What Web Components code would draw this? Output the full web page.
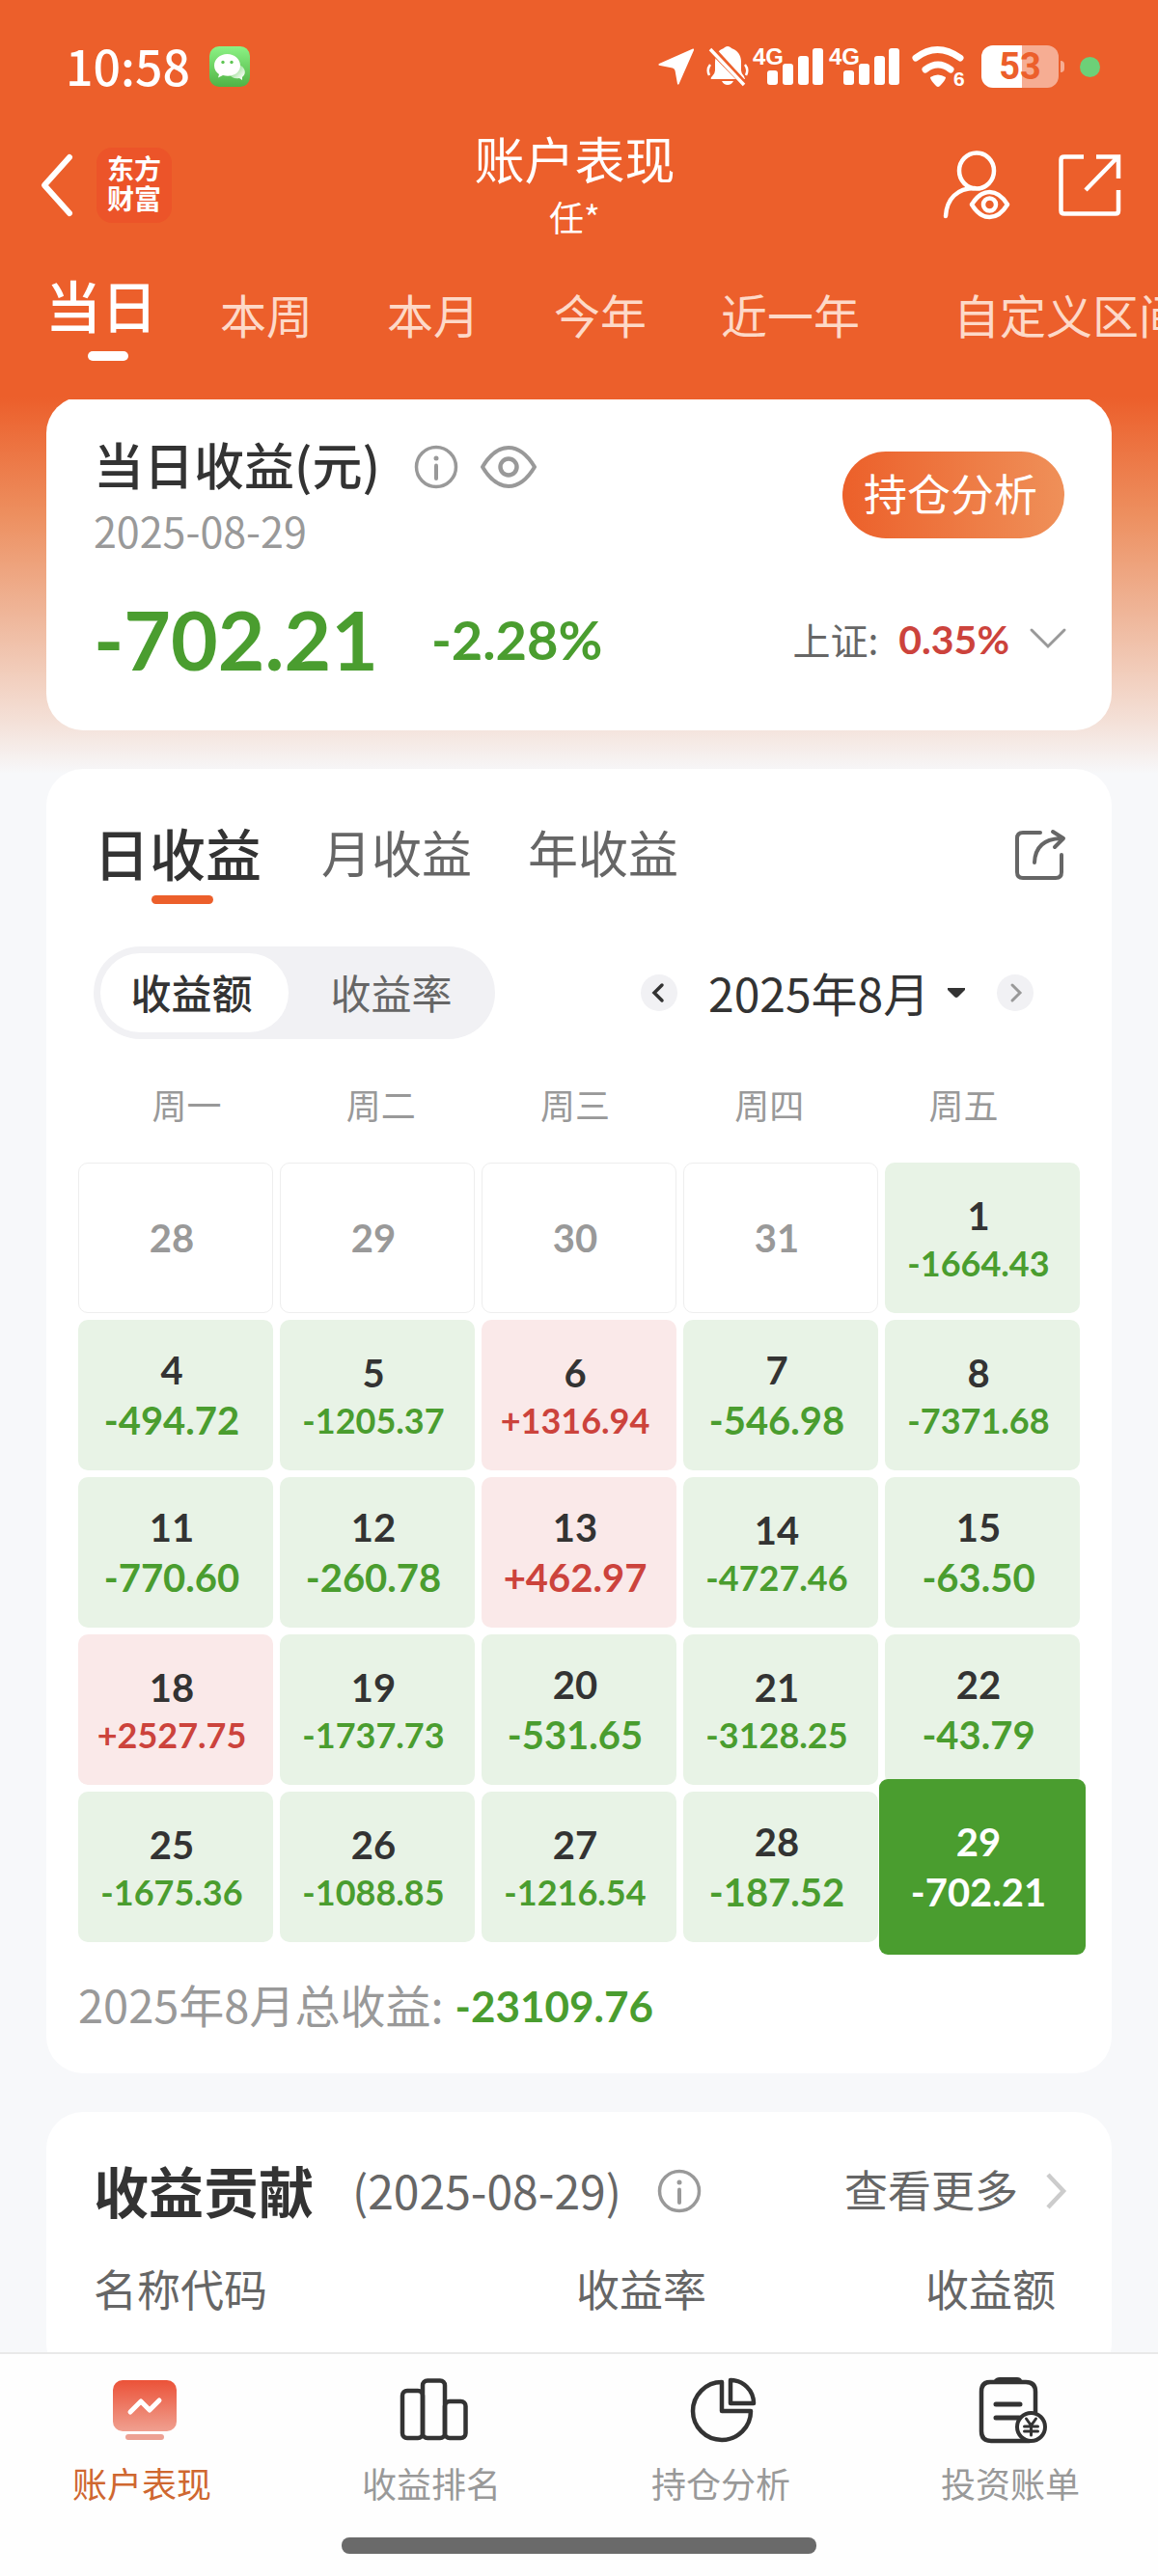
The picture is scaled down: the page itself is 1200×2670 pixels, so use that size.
<!DOCTYPE html>
<html lang="zh-CN">
<head>
<meta charset="utf-8">
<meta name="viewport" content="width=device-width, initial-scale=1">
<title>账户表现</title>
<style>
  html, body { margin: 0; height: 100%; }
  body {
    font-family: "Noto Sans CJK SC", "Noto Sans", sans-serif;
    color: #333;
    --brand: #ec5f2b;
    --down: #4a9d2f;
    --up: #cc433c;
    --muted: #999;
    --soft: #666;
    --figures: Lato, "Noto Sans CJK SC", sans-serif;
  }
</style>
</head>
<body>
<account-app></account-app>
<script>
const BASE = `
  *, *::before, *::after { box-sizing: border-box; }
  button, select { font: inherit; color: inherit; background: none; border: 0; margin: 0; padding: 0; appearance: none; }
  a { color: inherit; text-decoration: none; }
  h1, h2, p { margin: 0; font-weight: inherit; }
`;
function element(name, css, html) {
  customElements.define(name, class extends HTMLElement {
    constructor() {
      super();
      const markup = typeof html === 'function' ? html(this) : html;
      this.attachShadow({ mode: 'open' }).innerHTML = `<style>${BASE}${css}</style>${markup}`;
    }
  });
}

/* name: [width, height, drawing] */
const ICONS = {
  wechat: [42, 42, `<defs><linearGradient id="g" x2="0" y2="1"><stop stop-color="#8cf285"/><stop offset="1" stop-color="#50b345"/></linearGradient>
    <linearGradient id="b" x2="1" y2="1"><stop stop-color="#69cf5e"/><stop offset=".9" stop-color="#fff"/></linearGradient></defs>
    <rect width="42" height="42" rx="10" fill="url(#g)"/>
    <path d="M28 19a8.500 7.500 0 0 1 6 13v3l-3-2c-5 1-9-1-10-4 5-1 8-5 7-10z" fill="url(#b)"/>
    <path d="M18.500 8C11 8 5 13 5 20c0 4 2 7 5 9l-1 3.500 5-2.500c10 2.500 18-2.500 18-10 0-7-6-12-13.500-12z" fill="#fff"/>
    <circle cx="14" cy="16.500" r="1.700" fill="#5fc554"/><circle cx="23" cy="16.500" r="1.700" fill="#5fc554"/>`],
  locate: [38, 40, `<path d="M36 1.500 1 17q-1.500 1 0 1.800l14 2.700q2 .5 2.500 2.500L20 38q.8 1.500 1.600 0L37 3q.5-2-1-1.500z" fill="#fff"/>`],
  mute: [44, 44, `<path d="M22 1c2 0 3 1 4 2 6 2 10 7 10 14v9q0 3 3 6l1 3H5q-1-1 1-3 3-3 3-6v-8C9 10 12 5 18 3c1-1 2-2 4-2z" fill="#fff"/>
    <path d="M16 37h12q-2 4-6 4t-6-4z" fill="#fff"/><path d="M4 20q-4 5-1 11M40 20q4 5 1 11" stroke="#fff" stroke-width="2.500" fill="none"/>
    <path d="M0 0h7L42 38l1 6h-4L0 4z" fill="#ec5f2b"/><path d="M4 4 39 41" stroke="#fff" stroke-width="3.500"/>`],
  signal: [75, 42, `<text x="0" y="19" font-family="Liberation Sans, sans-serif" font-weight="700" font-size="24" fill="#fff">4G</text>
    <g fill="#fff"><rect x="15" y="25" width="11" height="15" rx="3"/><rect x="31" y="18" width="11" height="22" rx="3"/><rect x="47" y="10" width="11" height="30" rx="3"/><rect x="62" y="2" width="11" height="38" rx="3"/></g>`],
  wifi: [58, 44, `<g fill="none" stroke="#fff" stroke-width="7" stroke-linecap="round"><path d="M5 13q22-17 46 0"/><path d="M15 25q13-10 26 0"/></g>
    <path d="M20 33q8-5 16 0 0 3-6 9-2 2-4 0-6-6-6-9z" fill="#fff"/>
    <text x="44" y="42" font-family="Liberation Sans, sans-serif" font-weight="700" font-size="21" fill="#fff">6</text>`],
  back: [36, 68, `<path d="M31 5 5 34l26 29" fill="none" stroke="#fff" stroke-width="6" stroke-linecap="round" stroke-linejoin="round"/>`],
  person: [72, 72, `<g fill="none" stroke="#fff" stroke-width="4.500" stroke-linecap="round"><ellipse cx="36" cy="21" rx="18" ry="18.500"/><path d="M4 68C5 50 16 39 34 39"/>
    <path d="M31 56q8-13 18.500-13T68 56q-8 13-18.500 13T31 56z" stroke-linejoin="round"/><circle cx="49.500" cy="56" r="6.500"/></g>`],
  open: [66, 66, `<g fill="none" stroke="#fff" stroke-width="4.500"><path d="M27 3.500H7q-3.500 0-3.500 3v53q0 3 3.500 3h53q3 0 3-3V38"/><path d="M40 3.500h23V26M62 4 29 38"/></g>`],
  info: [46, 46, `<circle cx="23" cy="23" r="20.500" fill="none" stroke="#999" stroke-width="3.500"/><circle cx="23" cy="14" r="2.500" fill="#999"/><path d="M23 21.500V35" stroke="#999" stroke-width="4" stroke-linecap="round"/>`],
  eye: [58, 46, `<path d="M2 23Q14 3 29 3t27 20Q44 43 29 43T2 23z" fill="none" stroke="#999" stroke-width="4" stroke-linejoin="round"/><circle cx="29" cy="23" r="8.500" fill="none" stroke="#999" stroke-width="4.500"/>`],
  down: [38, 22, `<path d="M2 2l17 17L36 2" fill="none" stroke="#999" stroke-width="3" stroke-linecap="round"/>`],
  share: [54, 54, `<g fill="none" stroke="#666" stroke-width="4" stroke-linecap="round" stroke-linejoin="round"><path d="M27 4H9q-6 0-6 6v35q0 6 6 6h34q6 0 6-6V27"/><path d="M21 35Q22 11 48 10M40 3l11 7-9 9"/></g>`],
  prev: [38, 38, `<circle cx="19" cy="19" r="19" fill="#f1f1f4"/><path d="M22 11l-8 8 8 8" fill="none" stroke="#333" stroke-width="3.500" stroke-linecap="round"/>`],
  next: [38, 38, `<circle cx="19" cy="19" r="19" fill="#f1f1f4"/><path d="M16 11l8 8-8 8" fill="none" stroke="#999" stroke-width="3" stroke-linecap="round"/>`],
  caret: [20, 12, `<path d="M1 1h18v2l-7 7q-2 2-4 0L1 3z" fill="#333"/>`],
  more: [22, 40, `<path d="M3 3l16 17L3 37" fill="none" stroke="#ccc" stroke-width="4.500"/>`],
  chart: [68, 68, `<defs><linearGradient id="c" x2="0" y2="1"><stop stop-color="#eb5238"/><stop offset="1" stop-color="#f0a090"/></linearGradient></defs>
    <rect x="1" y="3" width="66" height="53" rx="10" fill="url(#c)"/><rect x="14" y="59" width="40" height="6" rx="3" fill="#eda193"/>
    <path d="M19 36 30 25l9 9 10-10" fill="none" stroke="#fff" stroke-width="5" stroke-linecap="round" stroke-linejoin="round"/>`],
  rank: [72, 68, `<g fill="none" stroke="#333" stroke-width="4.500"><rect x="3" y="14" width="21" height="49" rx="5"/><rect x="24" y="3.500" width="23" height="59.500" rx="5"/><rect x="47" y="25" width="21.500" height="38" rx="5"/></g>`],
  pie: [68, 68, `<g fill="none" stroke="#333" stroke-width="4.500" stroke-linejoin="round"><path d="M32 5a30 30 0 1 0 30 30H32z"/><path d="M41 3v24h24A24 24 0 0 0 41 3z"/></g>`],
  bill: [72, 70, `<g fill="none" stroke="#333" stroke-width="4.500" stroke-linecap="round"><path d="M59 36V15q0-10-10-10H12Q3 5 3 15v41q0 10 10 10h40"/><path d="M18 28h25M18 42h24" stroke-width="5"/></g>
    <path d="M16 3q2-3 6-3h18q4 0 5 3l1 3H15z" fill="#333"/><circle cx="54.500" cy="51.500" r="14.500" fill="#fff" stroke="#333" stroke-width="4"/>
    <path d="M49.500 43l5 7 5-7M54.500 50v10M47.500 51h14M47.500 56h14" fill="none" stroke="#333" stroke-width="3" stroke-linecap="round"/>`]
};
element('app-icon', `:host { display: block; flex: none; } svg { display: block; overflow: visible; }`, el => {
  const [w, h, drawing] = ICONS[el.getAttribute('name')];
  return `<svg width="${w}" height="${h}" viewBox="0 0 ${w} ${h}" aria-hidden="true">${drawing}</svg>`;
});

element('status-bar', `
  :host { display: flex; justify-content: space-between; align-items: center; height: 132px; padding: 6px 60px 0 68px; color: #fff; }
  div { display: flex; align-items: center; }
  .left { gap: 20px; }
  time { padding-bottom: 4px; font-size: 50px; font-weight: 500; line-height: 60px; }
  .bell { margin-left: 12px; }
  .sig { margin-left: 4px; }
  .wifi { margin-left: 10px; }
  .battery { margin-left: 15px; width: 80px; height: 44px; border-radius: 12px; justify-content: center;
    background: linear-gradient(90deg, #fff 52%, #f6ad93 52%); color: var(--brand); font: 700 38px/44px Roboto, sans-serif; }
  .nub { width: 4px; height: 12px; margin-left: 2px; border-radius: 0 4px 4px 0; background: #f6ad93; }
  .dot { width: 21px; height: 21px; margin-left: 16px; border-radius: 50%; background: #6dd078; }
`, `
  <div class="left"><time>10:58</time><app-icon name="wechat"></app-icon></div>
  <div><app-icon name="locate"></app-icon><app-icon class="bell" name="mute"></app-icon>
    <app-icon class="sig" name="signal"></app-icon><app-icon class="sig" name="signal"></app-icon>
    <app-icon class="wifi" name="wifi"></app-icon><div class="battery">53</div><span class="nub"></span><span class="dot"></span></div>
`);

element('page-header', `
  :host { display: grid; grid-template-columns: 1fr auto 1fr; grid-template-rows: 120px; align-items: center; height: 120px; padding: 0 38px 0 41px; color: #fff; }
  .side { display: flex; align-items: center; gap: 23px; }
  .end { justify-content: flex-end; gap: 48px; }
  .logo { width: 78px; height: 78px; padding: 6px 11px; border-radius: 16px; background: #ec5429; word-break: break-all;
    font-weight: 700; font-size: 28px; line-height: 31px; }
  .title { margin-right: 12px; padding-top: 4px; text-align: center; line-height: 60px; }
  h1 { font-size: 52px; } p { font-size: 36px; }
`, `
  <div class="side"><button aria-label="返回"><app-icon name="back"></app-icon></button><div class="logo">东方财富</div></div>
  <div class="title"><h1>账户表现</h1><p>任*</p></div>
  <div class="side end"><button aria-label="账户"><app-icon name="person"></app-icon></button><button aria-label="分享"><app-icon name="open"></app-icon></button></div>
`);

element('period-tabs', `
  :host { display: flex; align-items: flex-start; gap: 53px; height: 162px; padding: 28px 0 0 47px; overflow: hidden; white-space: nowrap; }
  button { flex: none; padding: 10px 12px 0; font-size: 48px; line-height: 70px; color: #fdd9c8; }
  button[aria-selected=true] { padding: 0; font-size: 58px; font-weight: 500; color: #fff; }
  button[aria-selected=true]::after { content: ""; display: block; width: 42px; height: 10px; margin: 14px 0 0 44px; border-radius: 5px; background: #fff; }
  .range { padding-left: 32px; }
`, `
  <button role="tab" aria-selected="true">当日</button><button role="tab">本周</button><button role="tab">本月</button>
  <button role="tab">今年</button><button role="tab">近一年</button><button role="tab" class="range">自定义区间</button>
`);

element('ui-card', `:host { display: block; border-radius: 38px; background: #fff; }`, `<slot></slot>`);

element('profit-summary', `
  :host { display: block; padding: 36px 47px 24px 49px; }
  .row { display: flex; align-items: center; justify-content: space-between; }
  .name { display: flex; align-items: center; line-height: 68px; }
  h2 { font-size: 52px; font-weight: 500; margin-right: 35px; }
  .name button { margin: 6px 23px 0 0; }
  .date { font-size: 43px; line-height: 68px; color: var(--muted); }
  .cta { width: 230px; height: 90px; margin: -4px 2px 0 0; padding: 0 6px 6px 0; border-radius: 45px; background: linear-gradient(90deg, #ec602a, #ef9059); color: #fff; font-size: 45px; }
  .figures { height: 150px; padding-top: 8px; }
  .amounts, .index { display: flex; align-items: center; }
  .amounts { gap: 55px; color: var(--down); font-family: var(--figures); font-weight: 700; }
  .big { font-size: 84px; } .rate { font-size: 56px; }
  .index { gap: 21px; font-size: 39px; color: var(--soft); }
  .index b { font-family: var(--figures); font-size: 41px; color: var(--up); }
`, `
  <div class="row">
    <div><div class="name"><h2>当日收益(元)</h2><button aria-label="说明"><app-icon name="info"></app-icon></button><button aria-label="隐藏金额"><app-icon name="eye"></app-icon></button></div>
    <p class="date">2025-08-29</p></div>
    <button class="cta">持仓分析</button>
  </div>
  <div class="row figures">
    <div class="amounts"><span class="big">-702.21</span><span class="rate">-2.28%</span></div>
    <button class="index"><span>上证:</span><b>0.35%</b><app-icon name="down"></app-icon></button>
  </div>
`);

element('day-cell', `
  :host { display: flex; flex-direction: column; align-items: center; justify-content: center; position: relative; height: 156px; padding-right: 8px;
    border-radius: 10px; font-family: var(--figures); font-weight: 700; font-size: 40px; line-height: 52px; }
  :host([kind=out]) { border: 1px solid #eee; color: var(--muted); }
  :host([kind=down]) { background: #e8f3e6; }
  :host([kind=up]) { background: #fae9e9; }
  span { position: relative; }
  .value { color: var(--down); }
  :host([kind=up]) .value { color: var(--up); }
  .long { font-size: 36px; line-height: 46px; }
  :host([selected]) { color: #fff; }
  :host([selected]) .value { color: #fff; }
  :host([selected])::before { content: ""; position: absolute; inset: -13px -6px; border-radius: 9px; background: var(--down); }
`, el => {
  const value = el.getAttribute('value') || '';
  return `<span>${el.getAttribute('day')}</span>` + (value ? `<span class="value${value.length > 7 ? ' long' : ''}">${value}</span>` : '');
});

const DAYS = [[28], [29], [30], [31], [1, '-1664.43'],
  [4, '-494.72'], [5, '-1205.37'], [6, '+1316.94'], [7, '-546.98'], [8, '-7371.68'],
  [11, '-770.60'], [12, '-260.78'], [13, '+462.97'], [14, '-4727.46'], [15, '-63.50'],
  [18, '+2527.75'], [19, '-1737.73'], [20, '-531.65'], [21, '-3128.25'], [22, '-43.79'],
  [25, '-1675.36'], [26, '-1088.85'], [27, '-1216.54'], [28, '-187.52'], [29, '-702.21']];
const cell = ([day, value], i) => `<day-cell day="${day}" ${value ? `value="${value}" kind="${value[0] === '+' ? 'up' : 'down'}"` : 'kind="out"'}${i === DAYS.length - 1 ? ' selected' : ''}></day-cell>`;

element('profit-calendar', `
  :host { display: block; padding: 45px 33px 37px; }
  .tabs, .tools { display: flex; align-items: flex-start; padding: 0 16px; }
  .tabs { gap: 58px; height: 95px; padding-right: 14px; }
  .tabs button { font-size: 52px; line-height: 82px; color: var(--soft); }
  .tabs button[aria-selected=true] { padding-right: 4px; font-size: 58px; font-weight: 500; color: #333; }
  .tabs button[aria-selected=true]::after { content: ""; display: block; width: 64px; height: 9px; margin: 4px 0 0 60px; border-radius: 5px; background: var(--brand); }
  .tabs .share { margin: 17px 0 0 auto; }
  .tools { align-items: center; justify-content: space-between; margin-top: 44px; padding-right: 48px; }
  .segment { display: flex; padding: 7px; border-radius: 48px; background: #f1f1f4; font-size: 42px; }
  .segment button { width: 195px; height: 82px; padding: 0 6px 4px 0; border-radius: 41px; color: var(--soft); }
  .segment button + button { width: 207px; padding: 0 0 4px 6px; }
  .segment button[aria-pressed=true] { background: #fff; color: #333; font-weight: 500; }
  .month { display: flex; align-items: center; }
  .month label { display: flex; align-items: center; margin: 0 32px; gap: 17px; }
  select { font-size: 48px; height: 72px; padding-bottom: 8px; color: #333; }
  .week { display: grid; grid-template-columns: repeat(5, 1fr); margin: 37px 0 31px; padding: 0 20px 0 12px; text-align: center; font-size: 36px; line-height: 60px; color: var(--muted); }
  .days { display: grid; grid-template-columns: repeat(5, 1fr); gap: 7px; }
  .total { margin-top: 29px; display: flex; align-items: center; gap: 12px; height: 70px; font-size: 47px; line-height: 70px; color: var(--muted); }
  .total b { padding-top: 4px; font-family: var(--figures); font-size: 44px; color: var(--down); }
`, `
  <div class="tabs"><button role="tab" aria-selected="true">日收益</button><button role="tab">月收益</button><button role="tab">年收益</button>
    <button class="share" aria-label="分享"><app-icon name="share"></app-icon></button></div>
  <div class="tools">
    <div class="segment"><button aria-pressed="true">收益额</button><button>收益率</button></div>
    <div class="month"><button aria-label="上个月"><app-icon name="prev"></app-icon></button>
      <label><select aria-label="月份"><option>2025年8月</option></select><app-icon name="caret"></app-icon></label>
      <button aria-label="下个月"><app-icon name="next"></app-icon></button></div>
  </div>
  <div class="week"><span>周一</span><span>周二</span><span>周三</span><span>周四</span><span>周五</span></div>
  <div class="days">${DAYS.map(cell).join('')}</div>
  <p class="total"><span>2025年8月总收益:</span><b>-23109.76</b></p>
`);

element('profit-contribution', `
  :host { display: block; padding: 40px 47px 60px 49px; color: var(--soft); }
  .head { display: flex; align-items: center; height: 80px; line-height: 80px; }
  h2 { font-size: 57px; font-weight: 700; color: #333; margin-right: 40px; }
  .date { font-size: 48px; margin-right: 37px; }
  .head app-icon { margin-top: 4px; }
  a { display: flex; align-items: center; gap: 28px; margin-left: auto; font-size: 45px; }
  table { width: 100%; margin-top: 28px; border-collapse: collapse; table-layout: fixed; font-size: 45px; line-height: 70px; }
  th { padding: 0; font-weight: 400; text-align: right; }
  th:first-child { width: 35%; text-align: left; }
  th:nth-child(2) { width: 28%; }
  th:last-child { padding-right: 11px; }
`, `
  <div class="head"><h2>收益贡献</h2><span class="date">(2025-08-29)</span><button aria-label="说明"><app-icon name="info"></app-icon></button>
    <a href="#more">查看更多<app-icon name="more"></app-icon></a></div>
  <table><thead><tr><th scope="col">名称代码</th><th scope="col">收益率</th><th scope="col">收益额</th></tr></thead></table>
`);

element('bottom-nav', `
  :host { display: block; flex: none; padding: 24px 0 23px; border-top: 2px solid #e9e9e9; background: #fefefe; }
  nav { display: grid; grid-template-columns: repeat(4, 1fr); }
  a { display: flex; flex-direction: column; align-items: center; font-size: 36px; line-height: 50px; color: var(--muted); }
  app-icon { height: 68px; margin-bottom: 16px; }
  span { padding-right: 6px; }
  a[aria-current] { color: #cf6730; }
  .home { width: 41%; height: 17px; margin: 32px auto 0; border-radius: 8px; background: #6a6a6a; }
`, `
  <nav><a href="#account" aria-current="page"><app-icon name="chart"></app-icon><span>账户表现</span></a>
    <a href="#rank"><app-icon name="rank"></app-icon><span>收益排名</span></a>
    <a href="#position"><app-icon name="pie"></app-icon><span>持仓分析</span></a>
    <a href="#bill"><app-icon name="bill"></app-icon><span>投资账单</span></a></nav>
  <div class="home"></div>
`);

element('account-app', `
  :host { display: flex; flex-direction: column; height: 100vh;
    background: linear-gradient(#ec5f2b 412px, #ed8f5f 533px, #efb79b 640px, #f4e2da 752px, #f7f8fa 802px); }
  main { flex: 1; min-height: 0; overflow: hidden; padding: 0 48px; }
  ui-card + ui-card { margin-top: 40px; }
  ui-card:first-child { margin-top: -3px; }
`, `
  <status-bar></status-bar><page-header></page-header><period-tabs></period-tabs>
  <main>
    <ui-card><profit-summary></profit-summary></ui-card>
    <ui-card><profit-calendar></profit-calendar></ui-card>
    <ui-card><profit-contribution></profit-contribution></ui-card>
  </main>
  <bottom-nav></bottom-nav>
`);
</script>
</body>
</html>
